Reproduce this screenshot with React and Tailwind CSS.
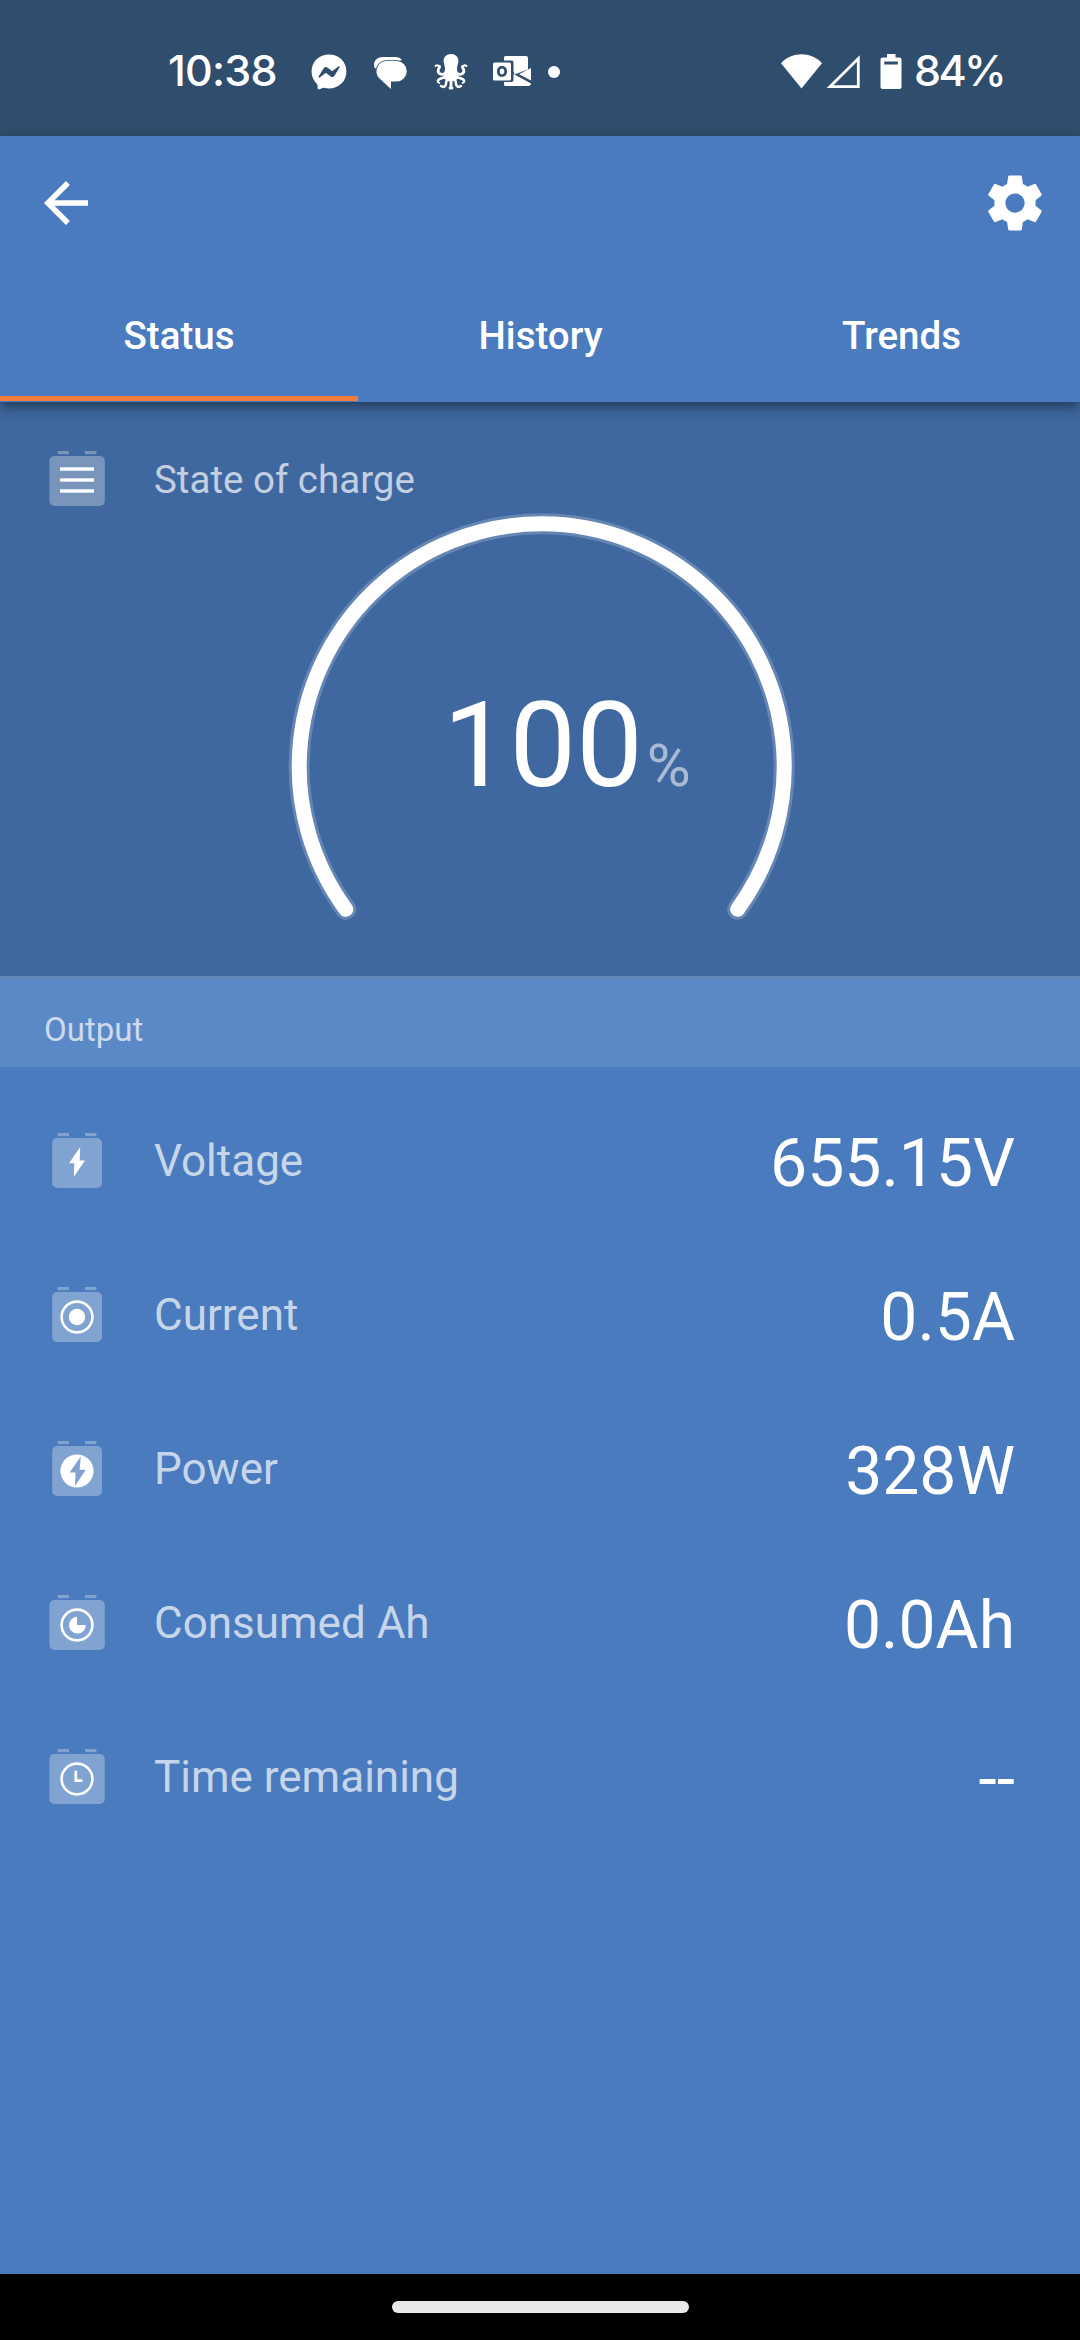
import { FaFacebookMessenger } from 'react-icons/fa'
import { MdArrowBack } from 'react-icons/md'

const tabs = [
  { name: 'Status', width: 'w-[358px]', active: true },
  { name: 'History', width: 'w-[365px]' },
  { name: 'Trends', width: 'w-[357px]' },
]

const rows = [
  { label: 'Voltage', value: '655.15V', icon: 'voltage' },
  { label: 'Current', value: '0.5A', icon: 'current' },
  { label: 'Power', value: '328W', icon: 'power' },
  { label: 'Consumed Ah', value: '0.0Ah', icon: 'consumed', wide: true },
  { label: 'Time remaining', value: '--', icon: 'time', wide: true },
]

const glyphs = {
  charge: (
    <g fill="#fff">
      <rect x="11" y="16.3" width="34" height="3.4" />
      <rect x="11" y="27.3" width="34" height="3.4" />
      <rect x="11" y="38.3" width="34" height="3.4" />
    </g>
  ),
  voltage: <path d="M31.2 14L20 30.2h5.3L24.9 43.8 36 27.4h-5.3z" fill="#fff" />,
  current: (
    <>
      <circle cx="28" cy="30" r="15.4" fill="none" stroke="#fff" strokeWidth="2.6" />
      <circle cx="28" cy="30" r="8.2" fill="#fff" />
    </>
  ),
  power: (
    <path
      fill="#fff"
      fillRule="evenodd"
      d="M28 13.4a16.6 16.6 0 100 33.2 16.6 16.6 0 000-33.2zM31.8 15.6l-1.2 13.2h6.2L26 45l.6-13.4h-6z"
    />
  ),
  consumed: (
    <>
      <circle cx="28" cy="30" r="15.4" fill="none" stroke="#fff" strokeWidth="2.6" />
      <path d="M28 30V21.8a8.4 8.4 0 108.8 8.2z" fill="#fff" />
    </>
  ),
  time: (
    <>
      <circle cx="28" cy="30" r="15.4" fill="none" stroke="#fff" strokeWidth="2.6" />
      <path d="M26.8 21.8v9.8h6.6" fill="none" stroke="#fff" strokeWidth="2.8" />
    </>
  ),
}

const BatteryIcon = ({ name, wide }) => (
  <svg className="h-14 w-14 shrink-0" viewBox="0 0 56 56">
    <g fill="#fff" fillOpacity="0.3">
      <rect x="8.6" y="0" width="11.4" height="3.2" />
      <rect x="36" y="0" width="11.4" height="3.2" />
      {wide ? (
        <rect x="0.4" y="5" width="55.4" height="50" rx="5" />
      ) : (
        <rect x="3.2" y="5" width="49.8" height="50" rx="5" />
      )}
    </g>
    {glyphs[name]}
  </svg>
)

const ChatIcon = () => (
  <svg className="h-9 w-[33px]" viewBox="0 0 33 36">
    <path d="M1 14.5A10 10 0 010 10.5C0 6 4 3 9 3h12c3 0 5.5 1 7 3" fill="#fff" />
    <path
      d="M13 7h9.600a10.200 10.200 0 010 20.400H17V35L5.500 24.400A10.200 10.200 0 0113 7z"
      fill="#fff"
      stroke="#2f4d6c"
      strokeWidth="1.6"
      paintOrder="stroke"
    />
  </svg>
)

const OctopusIcon = () => (
  <svg className="h-9 w-[34px]" viewBox="0 0 34 36">
    <path
      d="M17 0c4.500 0 7.400 3 7.400 7 0 3-1.400 4.500-1.400 7.500 0 3 1.400 5 1.400 7.500s-2.400 5.500-7.400 5.500-7.400-3-7.400-5.500 1.400-4.500 1.400-7.500S9.600 10 9.600 7c0-4 2.900-7 7.400-7z"
      fill="#fff"
    />
    <g fill="none" stroke="#fff" strokeLinecap="round">
      <path strokeWidth="2.8" d="M11 19.500c-4 2-7.300 0-6.800-3.300.3-2 1.600-2.400 1.300-3.700" />
      <path strokeWidth="2.8" d="M23 19.500c4 2 7.300 0 6.800-3.300-.3-2-1.600-2.400-1.300-3.700" />
      <path strokeWidth="2" d="M5.500 12.500c-.8-1.300-2.700-1.500-4-.5M28.500 12.500c.8-1.300 2.700-1.500 4-.5" />
      <path strokeWidth="2.6" d="M11.500 23c-3 1-6.500 1-7.500 3.500" />
      <path strokeWidth="2.6" d="M22.500 23c3 1 6.500 1 7.500 3.500" />
      <path strokeWidth="2" d="M4 26.500c-.5 1.300 0 2 1.300 2.400M30 26.500c.5 1.300 0 2-1.300 2.400" />
      <path strokeWidth="2.6" d="M13 26c-1.500 2-.5 4-1.500 5.500-1 1.300-3 1.500-4.500.5" />
      <path strokeWidth="2.6" d="M21 26c1.500 2 .5 4 1.500 5.500 1 1.300 3 1.500 4.500.5" />
      <path strokeWidth="2.8" d="M17 26v7.500M16 34h2" />
    </g>
  </svg>
)

const OutlookIcon = () => (
  <svg className="h-[31px] w-[39px]" viewBox="0 0 39 31">
    <path
      fill="#fff"
      d="M12.500 0H33a2 2 0 012 2v11.500L21.500 18.500 20.500 15V6.500a2 2 0 00-2-2H11V1.500A1.500 1.500 0 0112.500 0z"
    />
    <path fill="#fff" d="M38 12v12.500L26 18.300z" />
    <path fill="#fff" d="M20.500 18l17.500 9.500c0 1.500-1 2.500-2.500 2.500H12.500a1.500 1.500 0 01-1.500-1.500V26h7.500a2 2 0 002-2z" />
    <path
      fill="#fff"
      fillRule="evenodd"
      d="M1.500 6.500h15A1.500 1.500 0 0118 8v15a1.500 1.500 0 01-1.500 1.500h-15A1.500 1.500 0 010 23V8a1.500 1.500 0 011.500-1.500zM9 10c-3 0-5 2.200-5 5.400s2 5.400 5 5.400 5-2.200 5-5.400S12 10 9 10zm0 2.500c1.500 0 2.300 1.200 2.300 2.900s-.8 2.900-2.300 2.900-2.300-1.200-2.300-2.900.8-2.900 2.300-2.900z"
    />
  </svg>
)

const StatusBar = () => (
  <div className="flex h-[136px] items-center bg-[#2f4d6c] pt-[7px] pr-[78px] pl-[168px] font-['Inter',sans-serif] text-[43px] font-medium text-white">
    <span className="-mt-0.5 w-[143px] tracking-[-0.8px]">10:38</span>
    <FaFacebookMessenger className="size-[36px]" />
    <div className="ml-[27px]">
      <ChatIcon />
    </div>
    <div className="ml-[27px]">
      <OctopusIcon />
    </div>
    <div className="ml-[25px]">
      <OutlookIcon />
    </div>
    <span className="ml-4 size-3 rounded-full bg-white" />
    <svg className="ml-auto h-9 w-[121px]" viewBox="0 0 121 36">
      <path fill="#fff" d="M0 9.200C11-2.600 30-2.600 41 9.200L20.500 34.500z" />
      <path fill="none" stroke="#fff" strokeWidth="2.800" d="M77.300 4.500v28.200H49z" />
      <path
        fill="#fff"
        fillRule="evenodd"
        d="M106 0h8.500v3.500h4a2 2 0 012 2V33a2 2 0 01-2 2h-17a2 2 0 01-2-2V5.500a2 2 0 012-2h4.500zM103.300 7.500v3h13.500v-3z"
      />
    </svg>
    <span className="-mt-0.5 ml-[12px] w-[88px] tracking-[-2.600px]">84%</span>
  </div>
)

const Gauge = () => (
  <div className="grid h-[469px]">
    <svg className="col-start-1 row-start-1 h-[469px] w-[1080px]" viewBox="0 0 1080 469">
      <g fill="none" stroke="#fff" strokeLinecap="round">
        <path strokeWidth="21" strokeOpacity="0.2" d="M345.800 402.300A242.500 242.500 0 11737.600 402.300" />
        <path strokeWidth="15" d="M345.800 402.300A242.500 242.500 0 11737.600 402.300" />
      </g>
    </svg>
    <div className="col-start-1 row-start-1 flex items-baseline self-start pt-[179px] pl-[443px]">
      <span className="text-[118.500px] leading-[119px] text-white">100</span>
      <span className="ml-1 text-[60px] leading-[60px] text-white/55">%</span>
    </div>
  </div>
)

export default function App() {
  return (
    <div className="flex h-[2340px] w-[1080px] flex-col overflow-hidden bg-[#4a7bbe] font-['Roboto',sans-serif]">
      <StatusBar />

      {/* Toolbar and tabs */}
      <header className="relative z-10 h-[266px] bg-[#4a7bbe] text-white shadow-[0_5px_12px_rgba(0,0,0,0.45)]">
        <div className="flex h-[134px] items-center justify-between pr-8 pl-[33px]">
          <MdArrowBack className="size-[66px]" />
          <svg className="size-[66px]" viewBox="0 0 24 24" fill="currentColor">
            <path d="M19.430 12.980c.04-.32.07-.64.07-.98s-.03-.66-.07-.98l2.110-1.650c.19-.15.24-.42.12-.64l-2-3.460c-.12-.22-.39-.3-.61-.22l-2.490 1c-.52-.4-1.080-.73-1.690-.98l-.38-2.650C14.460 2.180 14.250 2 14 2h-4c-.25 0-.46.18-.49.42l-.38 2.650c-.61.25-1.170.59-1.690.98l-2.490-1c-.23-.09-.49 0-.61.22l-2 3.460c-.13.22-.07.49.12.64l2.110 1.650c-.04.32-.07.65-.07.98s.03.66.07.98l-2.110 1.650c-.19.15-.24.42-.12.64l2 3.460c.12.22.39.3.61.22l2.490-1c.52.4 1.080.73 1.690.98l.38 2.650c.03.24.24.42.49.42h4c.25 0 .46-.18.49-.42l.38-2.650c.61-.25 1.170-.59 1.690-.98l2.490 1c.23.09.49 0 .61-.22l2-3.460c.12-.22.07-.49-.12-.64l-2.110-1.650zM12 15.500c-1.930 0-3.500-1.570-3.500-3.500s1.570-3.500 3.500-3.500 3.500 1.570 3.500 3.500-1.570 3.500-3.500 3.500z" />
          </svg>
        </div>
        <nav className="flex h-[132px] text-[38.5px] font-medium">
          {tabs.map((tab) => (
            <div
              key={tab.name}
              className={`flex flex-col items-center border-b border-[#4a7bbe] ${tab.width}`}
            >
              <span className="flex grow items-center pt-[5px]">{tab.name}</span>
              <span className={`h-[5px] w-full ${tab.active ? 'bg-[#ef7e3e]' : ''}`} />
            </div>
          ))}
        </nav>
      </header>

      {/* State of charge */}
      <section className="h-[574px] bg-[#3f68a0]">
        <div className="flex h-[105px] items-center pt-[49px] pl-[49px]">
          <BatteryIcon name="charge" wide />
          <span className="mt-0.5 ml-[49px] text-[38.5px] leading-[54px] text-white/70">State of charge</span>
        </div>
        <Gauge />
      </section>

      {/* Output readings */}
      <div className="flex h-[91px] items-center border-t-[3px] border-[#6488b7] bg-[#5b89c7] pt-3.5 pl-11 text-[33px] text-white/70">
        Output
      </div>
      <ul className="grow pt-[17px]">
        {rows.map((row) => (
          <li key={row.label} className="flex h-[154px] items-center pr-[65px] pl-[49px]">
            <BatteryIcon name={row.icon} wide={row.wide} />
            <span className="ml-[49px] text-[44px] text-white/70">{row.label}</span>
            <span className="mt-1 ml-auto text-[66px] text-white">{row.value}</span>
          </li>
        ))}
      </ul>

      {/* Gesture bar */}
      <div className="flex h-[66px] items-center justify-center bg-black">
        <div className="h-3 w-[297px] rounded-full bg-[#e8e8e8]" />
      </div>
    </div>
  )
}
